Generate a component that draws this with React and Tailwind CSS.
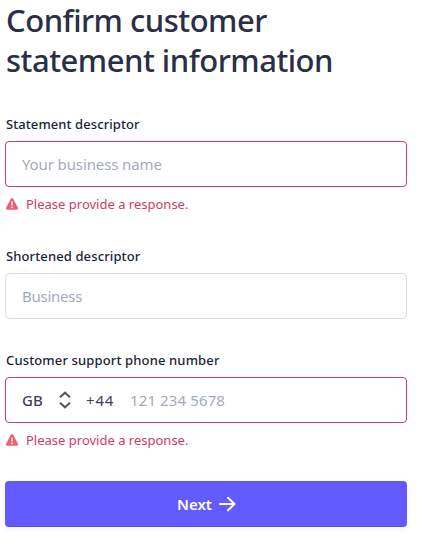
import React, { useState } from 'react';

const WarningIcon = () => (
  <svg className="h-3 w-3 shrink-0" viewBox="0 0 12 12" fill="none">
    <path
      d="M4.7.9a1.45 1.45 0 0 1 2.6 0l4.5 8.7A1.4 1.4 0 0 1 10.6 11.7H1.4A1.4 1.4 0 0 1 .2 9.6z"
      fill="#ed5f74"
    />
    <path d="M6 4v3" stroke="#fff" strokeWidth="1.4" strokeLinecap="round" />
    <circle cx="6" cy="9.3" r="0.85" fill="#fff" />
  </svg>
);

const SelectorIcon = () => (
  <svg className="h-[18px] w-3 shrink-0" viewBox="0 0 12 18" fill="none" stroke="#4f566b" strokeWidth="2">
    <path d="M1 6.3 6 1.7l5 4.6" />
    <path d="M1 11.7 6 16.3l5-4.6" />
  </svg>
);

const ArrowIcon = () => (
  <svg className="h-4 w-[18px] shrink-0" viewBox="0 0 18 16" fill="none" stroke="#fff" strokeWidth="2">
    <path d="M2 8h14.5M10 1.7 16.5 8 10 14.3" strokeLinecap="round" strokeLinejoin="round" />
  </svg>
);

const FieldError = () => (
  <p className="mt-[7px] flex items-center gap-2 pl-px leading-5 text-[#cd3d64]">
    <WarningIcon />
    <span className="text-[13px]">Please provide a response.</span>
  </p>
);

const App = () => {
  const [form, setForm] = useState({ statement: '', shortened: '', phone: '' });

  const handleChange = (e) => {
    setForm({ ...form, [e.target.name]: e.target.value });
  };

  return (
    <div className="min-h-screen bg-white font-['Noto_Sans',sans-serif]">
      <form className="ml-[5px] w-[402px]" onSubmit={(e) => e.preventDefault()}>
        <h1 className="pl-px text-[31px] font-medium leading-10 tracking-[-0.5px] text-[#2a2f45]">
          <span className="block whitespace-nowrap">Confirm customer</span>
          <span className="block whitespace-nowrap">statement information</span>
        </h1>

        <div className="mt-[34px]">
          <label htmlFor="statement" className="block pl-px text-[13px] font-medium leading-5 tracking-[0.08px] text-[#1a1f36]">
            Statement descriptor
          </label>
          <input
            id="statement"
            name="statement"
            className="mt-[7px] block h-[46px] w-full rounded border border-[#cd3d64] px-4 text-[15px] tracking-[-0.12px] text-[#3c4257] outline-none placeholder:text-[#a3acb9]"
            placeholder="Your business name"
            value={form.statement}
            onChange={handleChange}
          />
          <FieldError />
        </div>

        <div className="mt-8">
          <label htmlFor="shortened" className="block pl-px text-[13px] font-medium leading-5 tracking-[0.12px] text-[#1a1f36]">
            Shortened descriptor
          </label>
          <input
            id="shortened"
            name="shortened"
            className="mt-[7px] block h-[46px] w-full rounded border border-[#e0e0e0] px-4 text-[15px] tracking-[-0.25px] text-[#3c4257] outline-none placeholder:text-[#a3acb9]"
            placeholder="Business"
            value={form.shortened}
            onChange={handleChange}
          />
        </div>

        <div className="mt-[31px]">
          <label htmlFor="phone" className="block pl-px text-[13px] font-medium leading-5 tracking-[0.14px] text-[#1a1f36]">
            Customer support phone number
          </label>
          <div className="mt-[7px] flex h-[46px] items-center rounded border border-[#cd3d64] px-4 text-[15px] text-[#3c4257]">
            <button type="button" className="flex w-16 items-center text-left font-medium">
              <span className="w-[37px]">GB</span>
              <SelectorIcon />
            </button>
            <span className="w-11 tracking-[0.8px]">+44</span>
            <input
              id="phone"
              name="phone"
              className="w-40 tracking-[0.12px] outline-none placeholder:text-[#a3acb9]"
              placeholder="121 234 5678"
              value={form.phone}
              onChange={handleChange}
            />
          </div>
          <FieldError />
        </div>

        <button
          type="submit"
          className="mt-[31px] flex h-[46px] w-full items-center justify-center gap-[6px] rounded bg-[#635bff] pl-px text-[15px] font-semibold text-white shadow-[inset_0_-1px_0_rgba(0,0,0,0.12),0_2px_5px_rgba(60,66,87,0.06)]"
        >
          Next
          <ArrowIcon />
        </button>
      </form>
    </div>
  );
};

export default App;
